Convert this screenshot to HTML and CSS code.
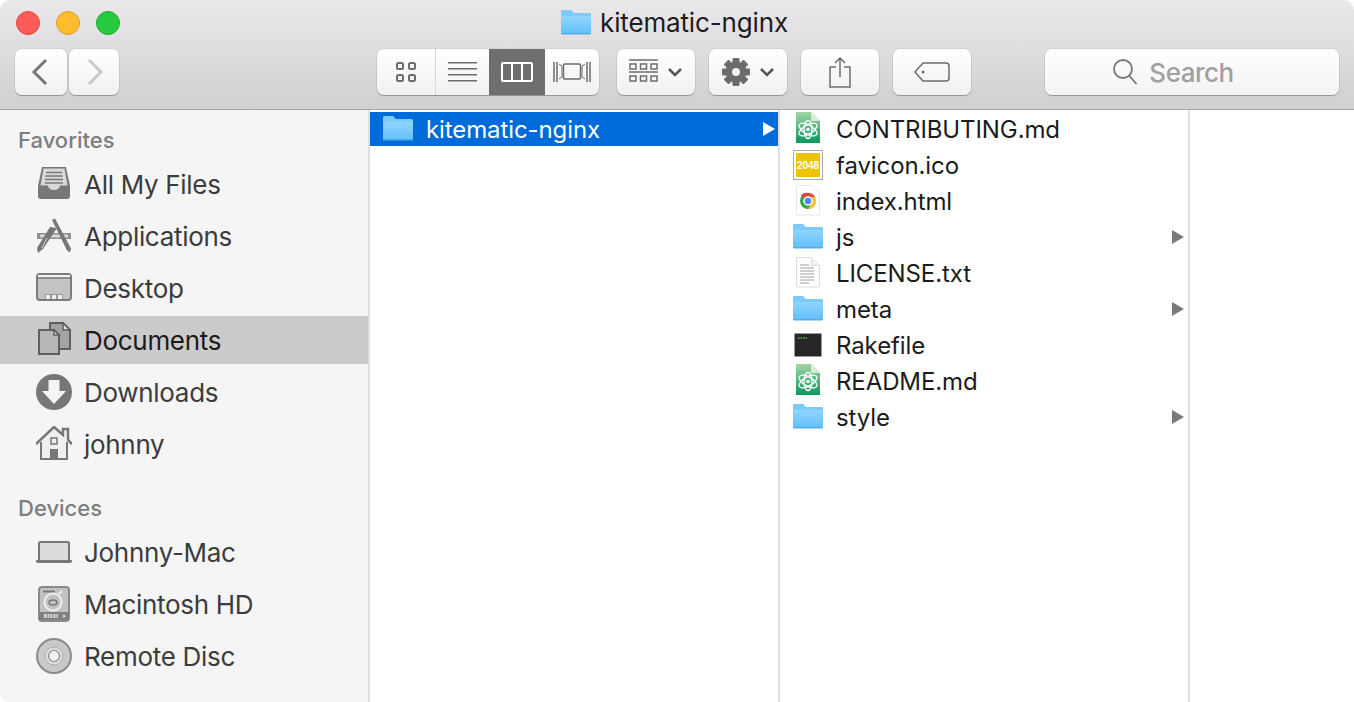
FILE: index.html
```html
<!DOCTYPE html>
<html lang="en">
<head>
  <meta charset="UTF-8">
  <meta name="viewport" content="width=device-width, initial-scale=1.0">
  <title>kitematic-nginx</title>
  <link rel="stylesheet" href="styles.css">
</head>
<body>
  <!-- Shared icons -->
  <svg class="defs" width="0" height="0" aria-hidden="true">
    <defs>
      <linearGradient id="folder-fill" x1="0" y1="0" x2="0" y2="1">
        <stop offset="0" stop-color="#8fd6fe"/>
        <stop offset="1" stop-color="#64c0fa"/>
      </linearGradient>
      <linearGradient id="atom-fill" x1="0" y1="0" x2="0" y2="1">
        <stop offset="0" stop-color="#a2d6a4"/>
        <stop offset="1" stop-color="#0b9860"/>
      </linearGradient>
      <symbol id="folder" viewBox="0 0 30 36">
        <path d="M0 7a2 2 0 0 1 2-2h8l2.500 3H28a2 2 0 0 1 2 2v18a1.500 1.500 0 0 1-1.500 1.500h-27A1.500 1.500 0 0 1 0 28z" fill="#52abe6"/>
        <path d="M0 7a2 2 0 0 1 2-2h8l2.500 3H28a2 2 0 0 1 2 2v18H0z" fill="#7ccbfb"/>
        <path d="M0 11h30v17H0z" fill="url(#folder-fill)"/>
      </symbol>
      <symbol id="atom-doc" viewBox="0 0 30 36">
        <path d="M3 1h15l9 9v22H3z" fill="url(#atom-fill)"/>
        <path d="M18 1l9 9h-9z" fill="#d6ecd4"/>
        <g fill="none" stroke="#fff" stroke-width="1.300">
          <ellipse cx="15" cy="18.500" rx="10" ry="4.500" transform="rotate(-30 15 18.500)"/>
          <ellipse cx="15" cy="18.500" rx="10" ry="4.500" transform="rotate(30 15 18.500)"/>
          <ellipse cx="15" cy="18.500" rx="4" ry="9"/>
        </g>
        <circle cx="15" cy="18.500" r="1.800" fill="#fff"/>
      </symbol>
    </defs>
  </svg>

  <div class="window">
    <header class="chrome">
      <div class="title-row">
        <div class="lights">
          <span class="light light-red"></span>
          <span class="light light-yellow"></span>
          <span class="light light-green"></span>
        </div>
        <div class="window-title">
          <svg class="title-folder" width="30" height="36"><use href="#folder"/></svg>
          <span>kitematic-nginx</span>
        </div>
      </div>

      <div class="toolbar">
        <button class="btn btn-back">
          <svg width="20" height="28" viewBox="0 0 20 28"><path d="M15 2L3 14l12 12" fill="none" stroke="#777" stroke-width="3"/></svg>
        </button>
        <button class="btn btn-forward">
          <svg width="20" height="28" viewBox="0 0 20 28"><path d="M5 2l12 12L5 26" fill="none" stroke="#c9c9c9" stroke-width="3"/></svg>
        </button>

        <div class="view-group">
          <button class="seg seg-icons">
            <svg width="22" height="22" viewBox="0 0 22 22" fill="none" stroke="#6c6c6c" stroke-width="2"><rect x="2" y="2" width="6" height="6" rx="1.500"/><rect x="14" y="2" width="6" height="6" rx="1.500"/><rect x="2" y="14" width="6" height="6" rx="1.500"/><rect x="14" y="14" width="6" height="6" rx="1.500"/></svg>
          </button>
          <button class="seg seg-list">
            <svg width="30" height="20" viewBox="0 0 30 20" fill="#6c6c6c"><rect y="0" width="29" height="1.500"/><rect y="6" width="29" height="1.500"/><rect y="12" width="29" height="1.500"/><rect y="18" width="29" height="1.500"/></svg>
          </button>
          <button class="seg seg-columns">
            <svg width="34" height="22" viewBox="0 0 34 22" fill="none" stroke="#fff" stroke-width="2"><rect x="2" y="2" width="30" height="18" rx="1"/><path d="M12 2v18M22 2v18"/></svg>
          </button>
          <button class="seg seg-flow">
            <svg width="38" height="22" viewBox="0 0 38 22" fill="none" stroke="#6c6c6c" stroke-width="1.500"><rect x="10.500" y="3" width="17" height="15" rx="1"/><path d="M1 1v20M4 1v20M37 1v20M34 1v20"/><path d="M6 3l3 2v11l-3 2M32 3l-3 2v11l3 2" stroke-width="1"/></svg>
          </button>
        </div>

        <button class="btn btn-tool btn-arrange">
          <svg width="30" height="26" viewBox="0 0 30 26" fill="none" stroke="#6c6c6c"><path d="M0 1h29M0 13h29" stroke-width="1.500"/><g stroke-width="1.500"><rect x="1" y="5" width="6" height="5"/><rect x="11.500" y="5" width="6" height="5"/><rect x="22" y="5" width="6" height="5"/><rect x="1" y="17" width="6" height="5"/><rect x="11.500" y="17" width="6" height="5"/><rect x="22" y="17" width="6" height="5"/></g></svg>
          <svg width="16" height="10" viewBox="0 0 16 10"><path d="M2 2l6 6 6-6" fill="none" stroke="#555" stroke-width="2.500"/></svg>
        </button>
        <button class="btn btn-tool btn-gear">
          <svg width="30" height="30" viewBox="0 0 30 30"><g fill="#6c6c6c"><rect x="11.500" y="1" width="7" height="28" rx="1"/><rect x="11.500" y="1" width="7" height="28" rx="1" transform="rotate(45 15 15)"/><rect x="11.500" y="1" width="7" height="28" rx="1" transform="rotate(90 15 15)"/><rect x="11.500" y="1" width="7" height="28" rx="1" transform="rotate(135 15 15)"/><circle cx="15" cy="15" r="10.500"/></g><circle cx="15" cy="15" r="4" fill="#efefef"/></svg>
          <svg width="16" height="10" viewBox="0 0 16 10"><path d="M2 2l6 6 6-6" fill="none" stroke="#555" stroke-width="2.500"/></svg>
        </button>
        <button class="btn btn-tool btn-share">
          <svg width="24" height="32" viewBox="0 0 24 32" fill="none" stroke="#6c6c6c" stroke-width="1.500"><path d="M8 11H2v20h20V11h-6M12 21V2M7 7l5-5 5 5"/></svg>
        </button>
        <button class="btn btn-tool btn-tag">
          <svg width="36" height="20" viewBox="0 0 36 20" fill="none" stroke="#6c6c6c" stroke-width="1.500"><path d="M9 1h23a3 3 0 0 1 3 3v12a3 3 0 0 1-3 3H9l-8-9z"/><circle cx="9" cy="10" r="1.500" fill="#6c6c6c" stroke="none"/></svg>
        </button>

        <div class="search">
          <svg width="26" height="28" viewBox="0 0 26 28" fill="none" stroke="#777" stroke-width="1.800"><circle cx="11" cy="11" r="9"/><path d="M17.500 18l7 8"/></svg>
          <span>Search</span>
        </div>
      </div>
    </header>

    <main class="panes">
      <nav class="sidebar">
        <h2 class="side-title">Favorites</h2>
        <a class="side-item">
          <svg class="side-icon" viewBox="0 0 36 36">
            <path d="M6 1h24l4 19v10a3 3 0 0 1-3 3H5a3 3 0 0 1-3-3V20z" fill="#777"/>
            <path d="M7.500 2.500h21l3 17H24a6 4.500 0 0 1-12 0H4.500z" fill="#d8d8d8"/>
            <path d="M10 6.500h16M9.500 10h17M9 13.500h18M9 17h18" stroke="#777" stroke-width="1.500"/>
          </svg>
          <span>All My Files</span>
        </a>
        <a class="side-item">
          <svg class="side-icon" viewBox="0 0 36 36">
            <path d="M1 15h34v6H1z" fill="#8f8f8f"/>
            <path d="M4 16.500h28v3H4z" fill="#d8d8d8"/>
            <path d="M16 2l3-1.500 16 30-1 4-3-2z" fill="#777"/>
            <path d="M21 10L7 31l-5 4-1-5 13-21z" fill="#777"/>
            <path d="M11 20l-5 10" stroke="#d8d8d8" stroke-width="1"/>
          </svg>
          <span>Applications</span>
        </a>
        <a class="side-item">
          <svg class="side-icon" viewBox="0 0 36 36">
            <rect x="1" y="4" width="34" height="26" rx="3" fill="#c3c3c3" stroke="#7c7c7c" stroke-width="2"/>
            <path d="M2 8h32" stroke="#7c7c7c" stroke-width="1.500"/>
            <path d="M2 6h32" stroke="#f5f5f5" stroke-width="2"/>
            <path d="M9 29v-5h18v5z" fill="#9a9a9a"/>
            <path d="M10 25h4v4h-4zM16 25h4v4h-4zM22 25h4v4h-4z" fill="#eee"/>
          </svg>
          <span>Desktop</span>
        </a>
        <a class="side-item side-item-active">
          <svg class="side-icon" viewBox="0 0 36 36">
            <path d="M14 1h13l7 7v19H14z" fill="#a3a3a3" stroke="#5f5f5f" stroke-width="2"/>
            <path d="M27 1v7h7z" fill="#ddd" stroke="#5f5f5f" stroke-width="1.500"/>
            <path d="M3 8h15l5 5v19H3z" fill="#b8b8b8" stroke="#5f5f5f" stroke-width="2"/>
            <path d="M18 8v5h5z" fill="#ddd" stroke="#5f5f5f" stroke-width="1.500"/>
          </svg>
          <span>Documents</span>
        </a>
        <a class="side-item">
          <svg class="side-icon" viewBox="0 0 36 36">
            <circle cx="18" cy="18" r="18" fill="#777"/>
            <path d="M12.500 6h11v11H30L18 30 6 17h6.500z" fill="#f5f5f5"/>
          </svg>
          <span>Downloads</span>
        </a>
        <a class="side-item">
          <svg class="side-icon" viewBox="0 0 36 36">
            <path d="M6 15v18h24V15L18 4z" fill="#efefef"/>
            <path d="M0 18L18 1l9 8V3h5v11l4 4" fill="none" stroke="#777" stroke-width="2.500"/>
            <path d="M5 16v17h26V16" fill="none" stroke="#777" stroke-width="2"/>
            <path d="M14 23h8v10h-8z" fill="#777"/>
            <rect x="15" y="12" width="6" height="6" fill="none" stroke="#777" stroke-width="1.500"/>
          </svg>
          <span>johnny</span>
        </a>

        <h2 class="side-title side-title-devices">Devices</h2>
        <a class="side-item">
          <svg class="side-icon" viewBox="0 0 36 36">
            <rect x="3" y="8" width="30" height="19" rx="1.500" fill="#dcdcdc" stroke="#777" stroke-width="2"/>
            <path d="M0 26h36v1a2 2 0 0 1-2 2H2a2 2 0 0 1-2-2z" fill="#777"/>
          </svg>
          <span>Johnny-Mac</span>
        </a>
        <a class="side-item">
          <svg class="side-icon" viewBox="0 0 36 36">
            <rect x="3" y="1" width="30" height="34" rx="3" fill="#c2c2c2" stroke="#8a8a8a" stroke-width="2"/>
            <path d="M3 26h30v6a2 2 0 0 1-2 2H5a2 2 0 0 1-2-2z" fill="#808080"/>
            <path d="M8 28h14v4H8z" fill="#d5d5d5"/>
            <path d="M11 28v4M14 28v4M17 28v4M20 28v4" stroke="#808080" stroke-width="1"/>
            <circle cx="28" cy="30" r="1.500" fill="#d5d5d5"/>
            <path d="M7 5.500h12" stroke="#777" stroke-width="2"/>
            <circle cx="17" cy="16" r="8.500" fill="none" stroke="#eee" stroke-width="2"/>
            <ellipse cx="17" cy="16.500" rx="4" ry="2.500" fill="none" stroke="#777" stroke-width="1.500"/>
            <path d="M23 8l3-3" stroke="#eee" stroke-width="2"/>
          </svg>
          <span>Macintosh HD</span>
        </a>
        <a class="side-item">
          <svg class="side-icon" viewBox="0 0 36 36">
            <circle cx="18" cy="18" r="17" fill="#c9c9c9" stroke="#8a8a8a" stroke-width="2"/>
            <circle cx="18" cy="18" r="9" fill="#dcdcdc" stroke="#b0b0b0" stroke-width="1"/>
            <circle cx="18" cy="18" r="5.500" fill="#f0f0f0" stroke="#8a8a8a" stroke-width="1.200"/>
          </svg>
          <span>Remote Disc</span>
        </a>
      </nav>

      <section class="column">
        <div class="row row-selected">
          <svg class="row-icon" width="30" height="36"><use href="#folder"/></svg>
          <span>kitematic-nginx</span>
          <span class="arrow arrow-white"></span>
        </div>
      </section>

      <section class="column">
        <div class="row">
          <svg class="row-icon" width="30" height="36"><use href="#atom-doc"/></svg>
          <span>CONTRIBUTING.md</span>
        </div>
        <div class="row">
          <svg class="row-icon" width="30" height="36" viewBox="0 0 30 36">
            <rect x="0.500" y="3.500" width="29" height="29" fill="#fff" stroke="#aaa"/>
            <rect x="3" y="6" width="24" height="24" rx="1" fill="#edc400"/>
            <text class="tile-text" x="15" y="22" text-anchor="middle">2048</text>
          </svg>
          <span>favicon.ico</span>
        </div>
        <div class="row">
          <svg class="row-icon" width="30" height="36" viewBox="0 0 30 36">
            <path d="M3.500 2.500h15l8 8v21.500h-23z" fill="#fff" stroke="#e6e6e6"/>
            <circle cx="15" cy="18" r="8" fill="#34a853"/>
            <path d="M15 10a8 8 0 0 1 7 4H15a4 4 0 0 0-4 2l-3-4a8 8 0 0 1 7-2z" fill="#e2483b"/>
            <path d="M22 14a8 8 0 0 1-7 12l4-7a4 4 0 0 0-1-5z" fill="#f9c730"/>
            <circle cx="15" cy="18" r="4" fill="#4a8af0" stroke="#fff" stroke-width="1.500"/>
          </svg>
          <span>index.html</span>
        </div>
        <div class="row">
          <svg class="row-icon" width="30" height="36"><use href="#folder"/></svg>
          <span>js</span>
          <span class="arrow"></span>
        </div>
        <div class="row">
          <svg class="row-icon" width="30" height="36" viewBox="0 0 30 36">
            <path d="M3.500 2.500h15l8 8v21.500h-23z" fill="#fff" stroke="#ddd"/>
            <path d="M18.500 2.500v8h8" fill="#f2f2f2" stroke="#ddd"/>
            <path d="M7 10h9M7 13h14M7 16h14M7 19h14M7 22h14M7 25h14M7 28h9" stroke="#a0a0a0" stroke-width="1"/>
          </svg>
          <span>LICENSE.txt</span>
        </div>
        <div class="row">
          <svg class="row-icon" width="30" height="36"><use href="#folder"/></svg>
          <span>meta</span>
          <span class="arrow"></span>
        </div>
        <div class="row">
          <svg class="row-icon" width="30" height="36" viewBox="0 0 30 36">
            <rect x="1.500" y="6.500" width="27" height="23" rx="1" fill="#262626" stroke="#999"/>
            <path d="M5 11h9" stroke="#54b948" stroke-width="1.500" stroke-dasharray="1.500 1"/>
          </svg>
          <span>Rakefile</span>
        </div>
        <div class="row">
          <svg class="row-icon" width="30" height="36"><use href="#atom-doc"/></svg>
          <span>README.md</span>
        </div>
        <div class="row">
          <svg class="row-icon" width="30" height="36"><use href="#folder"/></svg>
          <span>style</span>
          <span class="arrow"></span>
        </div>
      </section>

      <section class="column column-empty"></section>
    </main>
  </div>
</body>
</html>
```

FILE: styles.css
```css
/* Styles for the entire page */
body {
  background-color: #fff;
  font-family: Inter, "Liberation Sans", sans-serif;
  margin: 0;
  padding: 0;
}

.defs {
  display: block;
}

.window {
  border-radius: 10px;
  display: flex;
  flex-direction: column;
  height: 702px;
  overflow: hidden;
}

/* Title bar and toolbar */
.chrome {
  background: linear-gradient(#ebe8eb, #d1cfd1);
  border-bottom: 1px solid #a5a3a5;
  box-sizing: border-box;
  flex: none;
  height: 110px;
}

.title-row {
  align-items: center;
  display: grid;
  grid-template-columns: 1fr auto 1fr;
  height: 45px;
  padding: 0 16px;
}

.lights {
  display: flex;
  gap: 16px;
}

.light {
  border-radius: 50%;
  box-sizing: border-box;
  height: 24px;
  width: 24px;
}

.light-red { background-color: #fc5b57; border: 1px solid #e5453f; }
.light-yellow { background-color: #fdbc2e; border: 1px solid #e0a028; }
.light-green { background-color: #27c93f; border: 1px solid #1fae2f; }

.window-title {
  align-items: center;
  color: #1d1b1d;
  display: flex;
  font-size: 26px;
  gap: 9px;
  letter-spacing: -0.15px;
  margin-right: 5px;
}

.toolbar {
  display: flex;
  height: 46px;
  margin-top: 4px;
  padding-left: 15px;
}

.btn,
.seg {
  align-items: center;
  background: linear-gradient(#fff, #f1f1f1);
  border: 0;
  display: flex;
  justify-content: center;
  padding: 0;
}

.btn,
.view-group,
.search {
  border-radius: 7px;
  box-shadow: 0 1px 1px rgba(0, 0, 0, 0.28), 0 0 0 1px rgba(0, 0, 0, 0.05);
}

.btn-back { margin-right: 2px; width: 52px; }
.btn-forward { width: 50px; }

.view-group {
  display: flex;
  margin-left: 258px;
  overflow: hidden;
  width: 222px;
}

.seg-icons { border-right: 1px solid #d8d8d8; width: 59px; }
.seg-list { width: 53px; }
.seg-columns { background: #6e6e6e; width: 56px; }
.seg-flow { width: 54px; }

.btn-tool {
  gap: 8px;
  margin-left: 14px;
  width: 78px;
}

.btn-arrange { margin-left: 18px; }

.search {
  align-items: center;
  background: linear-gradient(#fff, #f3f3f3);
  box-sizing: border-box;
  color: #a0a0a0;
  display: flex;
  font-size: 26px;
  font-weight: 500;
  gap: 11px;
  justify-content: center;
  letter-spacing: -0.5px;
  margin-left: 74px;
  padding-right: 38px;
  width: 294px;
}

/* Main panes */
.panes {
  display: flex;
  flex: 1;
  min-height: 0;
}

.sidebar {
  background-color: #f5f5f5;
  border-right: 2px solid #e0e0e0;
  flex: none;
  width: 368px;
}

.side-title {
  color: #7d7d7d;
  font-size: 22px;
  font-weight: 500;
  line-height: 26px;
  margin: 17px 0 5px 18px;
}

.side-title-devices {
  margin-top: 25px;
}

.side-item {
  align-items: center;
  color: #3c3c3c;
  display: flex;
  font-size: 26px;
  gap: 12px;
  height: 52px;
  letter-spacing: -0.3px;
  padding-left: 36px;
}

.side-item-active {
  background: linear-gradient(transparent 2px, #cbcbcb 2px, #cbcbcb 50px, transparent 50px);
  color: #1b1b1b;
}

.side-icon {
  flex: none;
  height: 36px;
  width: 36px;
}

.column {
  border-right: 2px solid #e0e0e0;
  flex: none;
  padding-top: 2px;
  width: 408px;
}

.column-empty {
  border-right: 0;
  flex: 1;
}

.row {
  align-items: center;
  color: #1c1c1c;
  display: flex;
  font-size: 24px;
  gap: 13px;
  height: 34px;
  letter-spacing: -0.1px;
  margin-bottom: 2px;
  padding: 0 4px 0 13px;
}

.row-selected {
  background-color: #006bd9;
  color: #fff;
  padding-right: 3px;
}

.row-icon {
  flex: none;
}

.tile-text {
  fill: #fff;
  font-family: "Liberation Sans", sans-serif;
  font-size: 10px;
  font-weight: 700;
  letter-spacing: 0;
}

.arrow {
  border-bottom: 7px solid transparent;
  border-left: 12px solid #7a7a7a;
  border-top: 7px solid transparent;
  height: 0;
  margin-left: auto;
  width: 0;
}

.arrow-white {
  border-left-color: #fff;
}
```
